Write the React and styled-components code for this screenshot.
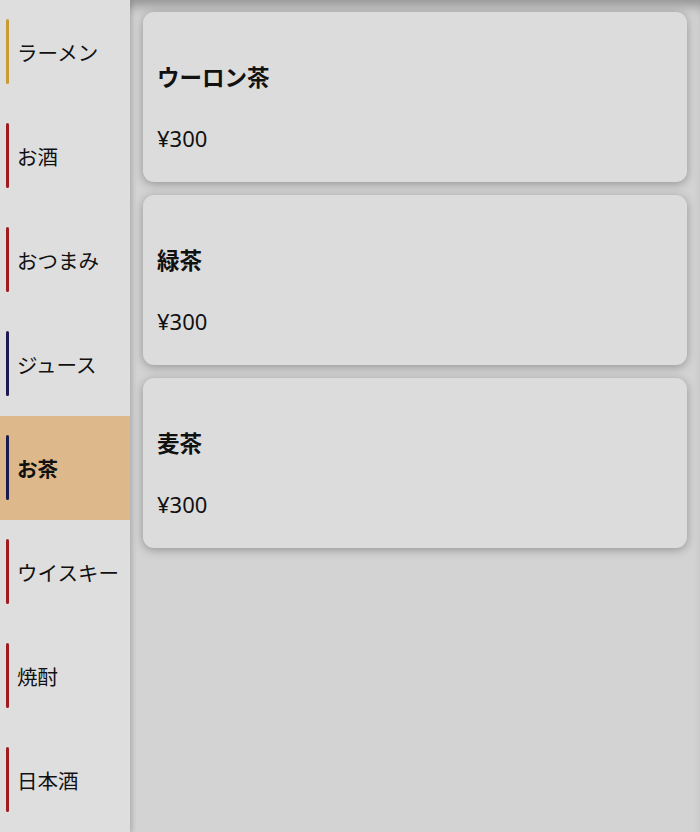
import React from 'react';
import styled, { createGlobalStyle } from 'styled-components';

const categories = [
  { name: 'ラーメン', color: '#c99b34' },
  { name: 'お酒', color: '#9e1b1f' },
  { name: 'おつまみ', color: '#9e1b1f' },
  { name: 'ジュース', color: '#1c1a4e' },
  { name: 'お茶', color: '#1c1a4e', active: true },
  { name: 'ウイスキー', color: '#9e1b1f' },
  { name: '焼酎', color: '#9e1b1f' },
  { name: '日本酒', color: '#9e1b1f' },
];

const items = [
  { name: 'ウーロン茶', price: '¥300' },
  { name: '緑茶', price: '¥300' },
  { name: '麦茶', price: '¥300' },
];

const App = () => {
  return (
    <>
      <GlobalStyle />
      <Wrapper>
        <Sidebar>
          {categories.map((c) => (
            <Category key={c.name} $active={c.active} $color={c.color}>
              {c.name}
            </Category>
          ))}
        </Sidebar>
        <Main>
          {items.map((item) => (
            <Card key={item.name}>
              <CardTitle>{item.name}</CardTitle>
              <CardPrice>{item.price}</CardPrice>
            </Card>
          ))}
        </Main>
      </Wrapper>
    </>
  );
};

const GlobalStyle = createGlobalStyle`
  html, body {
    margin: 0;
    padding: 0;
    height: 100%;
  }
  body {
    font-family: "Noto Sans", "Noto Sans CJK JP", sans-serif;
    color: #111;
  }
  #root {
    height: 100%;
  }
`;

const Wrapper = styled.div`
  display: grid;
  grid-template-columns: 130px 1fr;
  height: 832px;
  overflow: hidden;
`;

const Sidebar = styled.nav`
  display: flex;
  flex-direction: column;
  background-color: #dedede;
  position: relative;
  z-index: 1;
  box-shadow: 2px 0 5px rgba(0, 0, 0, 0.14);
`;

const Category = styled.div`
  position: relative;
  display: flex;
  align-items: center;
  height: 104px;
  flex-shrink: 0;
  padding-left: 17px;
  font-size: 20.5px;
  font-weight: ${({ $active }) => ($active ? 700 : 400)};
  background-color: ${({ $active }) => ($active ? '#dcb88b' : 'transparent')};

  &::before {
    content: '';
    position: absolute;
    left: 6px;
    top: 19px;
    bottom: 20px;
    width: 3px;
    border-radius: 2px;
    background-color: ${({ $color }) => $color};
  }
`;

const Main = styled.main`
  display: flex;
  flex-direction: column;
  gap: 13px;
  padding: 12px 13px;
  background-color: #d3d3d3;
  box-shadow: inset 0 12px 12px -6px rgba(0, 0, 0, 0.3);
`;

const Card = styled.div`
  display: flex;
  flex-direction: column;
  height: 170px;
  box-sizing: border-box;
  padding: 49px 14px 0;
  border-radius: 11px;
  background-color: #dcdcdc;
  box-shadow: 0 2px 10px rgba(0, 0, 0, 0.3);
`;

const CardTitle = styled.h3`
  margin: 0;
  font-size: 22.5px;
  line-height: 34px;
  font-weight: 700;
`;

const CardPrice = styled.span`
  margin-top: 26px;
  font-size: 22px;
  line-height: 34px;
`;

export default App;
